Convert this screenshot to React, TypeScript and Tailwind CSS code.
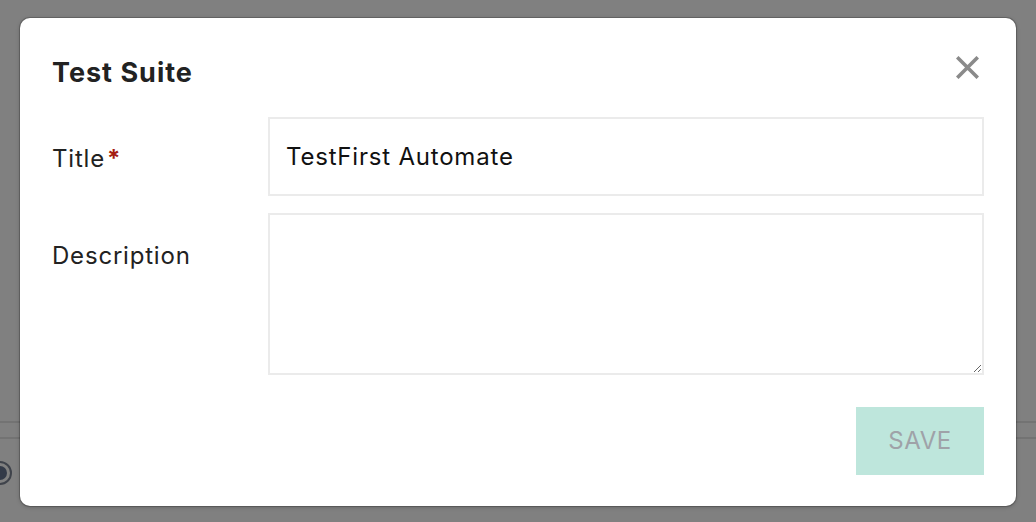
import { useState } from 'react';

export default function App() {
  const [title, setTitle] = useState('TestFirst Automate');
  const [desc, setDesc] = useState('');

  return (
    <div className="relative h-[522px] w-full overflow-hidden bg-[#808080] font-['Inter',sans-serif]">
      {/* dimmed page behind the dialog */}
      <div className="h-[421px]" />
      <div className="h-[16px] border-t-2 border-[#737373]" />
      <div className="flex h-[83px] items-start border-t-2 border-[#737373] pt-[22px]">
        <span className="-ml-[12px] flex h-[24px] w-[24px] items-center justify-center rounded-full border-2 border-[#3f434b]">
          <span className="h-[14px] w-[14px] rounded-full bg-[#333a48]" />
        </span>
      </div>

      {/* dialog */}
      <div className="absolute left-[20px] top-[18px] flex h-[488px] w-[996px] flex-col rounded-[10px] bg-white px-8 pt-[38px] shadow-[0_0_0_1px_rgba(0,0,0,0.18),0_1px_4px_rgba(0,0,0,0.25)]">
        <div className="flex h-8 items-center justify-between">
          <h2 className="mt-[2px] text-[27px] font-bold tracking-[1px] text-[#222]">Test Suite</h2>
          <button className="mr-[5px] -mt-[10px] flex h-[24px] w-[24px] items-center justify-center">
            <svg width="23" height="23" viewBox="0 0 23 23">
              <path d="M2.5 2.5 L20.5 20.5 M20.5 2.5 L2.5 20.5" stroke="#8a8a8a" strokeWidth="3.6" strokeLinecap="square" />
            </svg>
          </button>
        </div>

        <div className="mt-[29px] flex flex-col gap-[17px]">
          <div className="flex">
            <label className="w-[216px] shrink-0 pt-[28px] text-[24px] leading-[28px] tracking-[0.8px] text-[#222]">
              Title<span className="ml-[2px] font-bold text-[#a51c12]">*</span>
            </label>
            <input
              value={title}
              onChange={(e) => setTitle(e.target.value)}
              className="h-[79px] flex-1 border-2 border-[#ebebeb] px-4 text-[24px] tracking-[0.8px] text-[#111] outline-none"
            />
          </div>
          <div className="flex">
            <label className="w-[216px] shrink-0 pt-[29px] text-[24px] leading-[28px] tracking-[0.8px] text-[#222]">Description</label>
            <textarea
              value={desc}
              onChange={(e) => setDesc(e.target.value)}
              className="h-[162px] flex-1 resize-y border-2 border-[#ebebeb] px-4 py-3 text-[24px] outline-none"
            />
          </div>
        </div>

        <div className="mt-[32px] flex justify-end">
          <button className="h-[68px] w-[128px] bg-[#bee6dc] text-[24px] tracking-[0.5px] text-[#9fa2a8]">SAVE</button>
        </div>
      </div>
    </div>
  );
}
